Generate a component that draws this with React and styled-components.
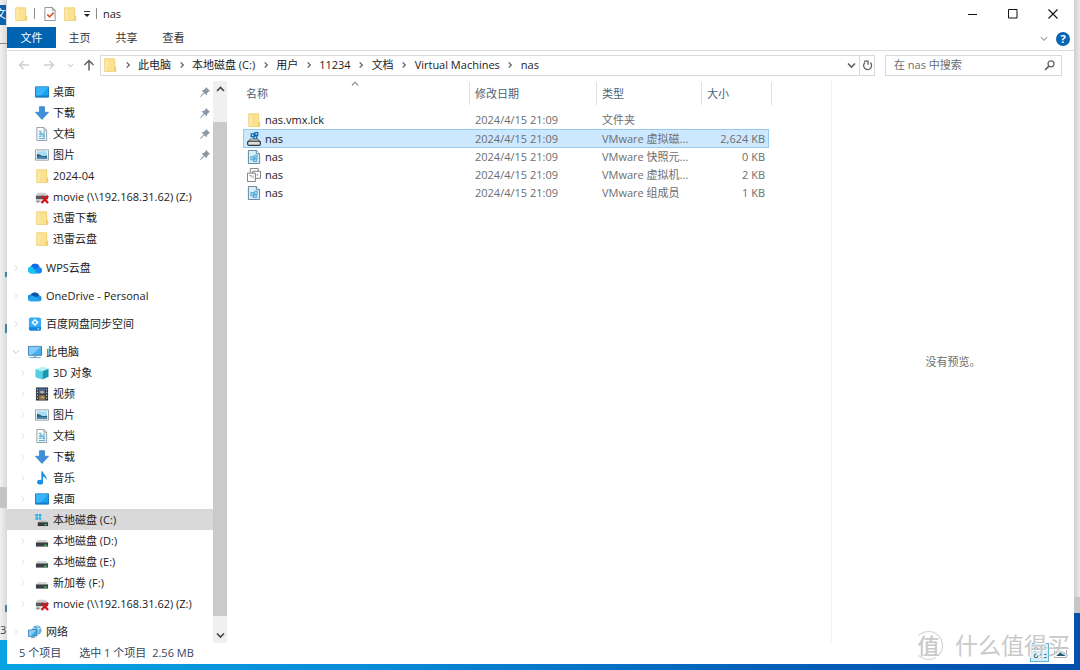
// src/App.jsx
import React from "react";
import styled, { createGlobalStyle, css } from "styled-components";

/* ---------- data ---------- */

const CRUMBS = ["此电脑", "本地磁盘 (C:)", "用户", "11234", "文档", "Virtual Machines", "nas"];

const NAV_GROUPS = [
  {
    id: "quick",
    items: [
      { icon: "desktop", label: "桌面", pinned: true },
      { icon: "download", label: "下载", pinned: true },
      { icon: "document", label: "文档", pinned: true },
      { icon: "picture", label: "图片", pinned: true },
      { icon: "folder", label: "2024-04" },
      { icon: "brokenDrive", label: "movie (\\\\192.168.31.62) (Z:)" },
      { icon: "folder", label: "迅雷下载" },
      { icon: "folder", label: "迅雷云盘" },
    ],
  },
  { id: "wps", root: { icon: "wps", label: "WPS云盘" } },
  { id: "onedrive", root: { icon: "onedrive", label: "OneDrive - Personal" } },
  { id: "baidu", root: { icon: "baidu", label: "百度网盘同步空间" } },
  {
    id: "pc",
    root: { icon: "computer", label: "此电脑", open: true },
    items: [
      { icon: "cube", label: "3D 对象", expandable: true },
      { icon: "video", label: "视频", expandable: true },
      { icon: "picture", label: "图片", expandable: true },
      { icon: "document", label: "文档", expandable: true },
      { icon: "download", label: "下载", expandable: true },
      { icon: "music", label: "音乐", expandable: true },
      { icon: "desktop", label: "桌面", expandable: true },
      { icon: "systemDrive", label: "本地磁盘 (C:)", expandable: true, active: true },
      { icon: "drive", label: "本地磁盘 (D:)", expandable: true },
      { icon: "drive", label: "本地磁盘 (E:)", expandable: true },
      { icon: "drive", label: "新加卷 (F:)", expandable: true },
      { icon: "brokenDrive", label: "movie (\\\\192.168.31.62) (Z:)", expandable: true },
    ],
  },
  { id: "network", root: { icon: "network", label: "网络" } },
];

const FILES = [
  { icon: "folder", name: "nas.vmx.lck", date: "2024/4/15 21:09", type: "文件夹", size: "" },
  { icon: "vmdk", name: "nas", date: "2024/4/15 21:09", type: "VMware 虚拟磁...", size: "2,624 KB", selected: true },
  { icon: "vmFile", name: "nas", date: "2024/4/15 21:09", type: "VMware 快照元...", size: "0 KB" },
  { icon: "vmx", name: "nas", date: "2024/4/15 21:09", type: "VMware 虚拟机...", size: "2 KB" },
  { icon: "vmFile", name: "nas", date: "2024/4/15 21:09", type: "VMware 组成员", size: "1 KB" },
];

/* ---------- icons ---------- */

const ICONS = {
  folder: (
    <>
      <path d="M1.500 .5h11.500v14H1.500z" fill="#fbe291" />
      <path d="M1.500 .5h3v14h-3z" fill="#fdebb0" />
      <path d="M12 9.500h2v5h-2z" fill="#efc75f" />
      <path d="M2 1h10.500v9h1v4.500H2z" fill="none" stroke="#f1d17a" />
    </>
  ),
  desktop: (
    <>
      <path d="M.5 2h14v11h-14z" fill="#18a4f5" stroke="#1878b8" />
      <path d="M1 2.500h13L5 12.500H1z" fill="#39b4fa" />
      <path d="M1 12h13" stroke="#0c6cad" />
    </>
  ),
  download: <path d="M4.800.7h5.400v6h4.300L7.500 14.500.5 6.700h4.300z" fill="#3c8fdd" stroke="#2b73b8" strokeWidth=".7" />,
  document: (
    <>
      <path d="M2 .5h7.500l3 3v11H2z" fill="#fff" stroke="#8d9aa3" />
      <path d="M9.500.5v3h3" fill="none" stroke="#8d9aa3" />
      <path d="M4 4.500h3M8.500 5.500h2.500M4 7.500h7M4 10h3M8.500 10.500h2.500M4 12.500h7" stroke="#409cc6" />
      <path d="M5 5.500h2.500v3.500H5zM8 7.500h2.500V11H8z" fill="#6db9dc" />
    </>
  ),
  picture: (
    <>
      <path d="M.5 2h14v11h-14z" fill="#fff" stroke="#8f989e" />
      <path d="M2 3.500h11v8H2z" fill="#a7dcf5" />
      <path d="M2 6.500c3 0 4 1.500 6 2s3-.5 5 0v3H2z" fill="#2c5f72" />
      <path d="M2 10c4-.8 7-.6 11 0v1.500H2z" fill="#4c8cb4" />
    </>
  ),
  drive: (
    <>
      <path d="M3 6.500h9l2 2.500H1z" fill="#d3d6d8" />
      <path d="M1 9h13v4.500H1z" fill="#3c4043" />
      <path d="M10 12h2.500" stroke="#3fd45a" strokeWidth="1.400" />
    </>
  ),
  brokenDrive: (
    <>
      <path d="M3 3h8l3 3H1z" fill="#cfcfcf" />
      <path d="M1 6h13v4H1z" fill="#55595c" />
      <path d="M1 12h5M3 11v3" stroke="#9c9c9c" strokeWidth="1.600" />
      <path d="M7 6.500l7 7.500M14 6.500l-7 7.500" stroke="#d3121c" strokeWidth="2.500" />
    </>
  ),
  systemDrive: (
    <>
      <path d="M.5 1h2.700v2.700H.5zM4 1h2.700v2.700H4zM.5 4.500h2.700v2.700H.5zM4 4.500h2.700v2.700H4z" fill="#19b1ea" />
      <path d="M5 8h7l2 2H3z" fill="#b7babc" />
      <path d="M3 10h11v4H3z" fill="#34383b" />
      <path d="M10 12.500h2.500" stroke="#3fd45a" strokeWidth="1.400" />
    </>
  ),
  wps: (
    <>
      <path d="M4 13.500a4 4 0 0 1-.8-7.800A5 5 0 0 1 12.400 6.600a3.500 3.500 0 0 1-.6 6.900z" fill="#1389f5" />
      <path d="M4 13.500a4 4 0 0 1 0-8c2.800 0 4 3.500 5 8z" fill="#19c3f0" />
      <path d="M3.200 5.700A5 5 0 0 1 12.400 6.600C8 6 8 10.500 6.500 8.800 5.500 7 4.500 6 3.200 5.700z" fill="#1767e8" />
    </>
  ),
  onedrive: (
    <>
      <path d="M3 13a3.500 3.500 0 0 1 0-7 5.200 5.200 0 0 1 9 .8A3.200 3.200 0 0 1 12.300 13z" fill="#1a8fe0" />
      <path d="M3 6a5.200 5.200 0 0 1 9 .8L7 9.500z" fill="#0a55ab" />
      <path d="M0 11c2-2.600 4.500-5 7-3l7.300 4c-.5.700-1.200 1-2 1H3c-1.500 0-2.600-.8-3-2z" fill="#27a5ec" />
    </>
  ),
  baidu: (
    <>
      <rect x="1" y=".5" width="13" height="14" rx="2" fill="#35acf6" />
      <path d="M1 11h13v1.500a2 2 0 0 1-2 2H3a2 2 0 0 1-2-2z" fill="#1583dc" />
      <path d="M7.500 3l2.800 2.800-2.800 2.800-2.800-2.800z" fill="none" stroke="#fff" strokeWidth="1.500" />
      <path d="M10 12.700h2" stroke="#fff" />
    </>
  ),
  computer: (
    <>
      <path d="M.5 1.500h14v9.500H.5z" fill="#45aef0" stroke="#3a7ba8" />
      <path d="M1 2h13L4 10.500H1z" fill="#83cdf8" />
      <path d="M6 11.500h3v1.500H6z" fill="#9ab4c4" />
      <path d="M1.500 13.500h12" stroke="#5d9fc8" />
    </>
  ),
  cube: (
    <>
      <path d="M.5 3.500L8 .5l6.500 2.500L8 5.500z" fill="#b7f0f7" />
      <path d="M.5 3.500L8 5.500v9L.5 12z" fill="#50d0e2" />
      <path d="M8 5.500L14.500 3v8.500L8 14.500z" fill="#1697b5" />
    </>
  ),
  video: (
    <>
      <path d="M1 .5h13v14H1z" fill="#303338" />
      <path d="M4 1.500h7v6H4z" fill="#4668b5" />
      <path d="M4 8.500h7V14H4z" fill="#826c4b" />
      <path d="M5 5l3-1 2 2-3 1zM5 11l4-1 1 2z" fill="#e3b84e" />
      <path d="M2.500 2v12M12.500 2v12" stroke="#e9e9e9" strokeDasharray="1.500 1.500" />
    </>
  ),
  music: (
    <>
      <path d="M6.800.5h1.700c.3 3.500 5.200 4.500 3.500 9.500-.3-2.500-1.700-3.500-3.500-4v6H6.800z" fill="#168fe6" />
      <ellipse cx="5.500" cy="12" rx="3.200" ry="2.500" fill="#168fe6" />
    </>
  ),
  network: (
    <>
      <circle cx="9.500" cy="5.500" r="5" fill="#65aee0" />
      <path d="M5 3c3 2 6 2 9 0M9.500.5c2 3 2 7 0 10" stroke="#cce9f8" fill="none" />
      <path d="M.5 5.500l9-1v7l-9 1z" fill="#39aaf0" stroke="#2d729f" strokeWidth=".8" />
      <path d="M4 12.500l4-.5v1.500l-5 1z" fill="#739bb5" />
      <path d="M1 6l8-1-6 6.800-2 .2z" fill="#86cff8" />
    </>
  ),
  vmdk: (
    <>
      <path d="M4.500 2h3v3h-3zM8.500 .7h3v3h-3zM7.500 4.500h3v3h-3z" fill="#cfe9fb" stroke="#0c69ad" strokeWidth="1.300" />
      <path d="M3.500 7.500h8l2.500 3H1z" fill="#f6f6f6" stroke="#55595d" />
      <rect x=".7" y="9.700" width="13.600" height="4.600" rx="1.500" fill="#dcdfe2" stroke="#33373b" strokeWidth="1.300" />
    </>
  ),
  vmFile: (
    <>
      <path d="M1.500 .5H10l3.500 3.500v10.500h-12z" fill="#d8effb" stroke="#607f92" />
      <path d="M10 .5V4h3.500" fill="#fff" stroke="#607f92" />
      <path d="M4 7h3.500v3.500H4zM8 5.500h3V9H8zM6.500 9.500h4v3h-4z" fill="#9bd1ee" stroke="#4ba1ce" strokeWidth=".8" />
    </>
  ),
  vmx: (
    <>
      <path d="M3.500.5h8.500V4M3.500.5V5" fill="#fff" stroke="#777" />
      <path d="M6 3.500h8.500V11H6z" fill="#fff" stroke="#777" />
      <path d="M.5 5.500h8.500v9H.5z" fill="#fff" stroke="#777" />
      <path d="M2.500 8h2v2M6.500 8v3M11 6v2.500" fill="none" stroke="#999" />
    </>
  ),
  check: (
    <>
      <path d="M2 .5h8l3 3v11H2z" fill="#fff" stroke="#8d8d8d" />
      <path d="M10 .5v3h3" fill="none" stroke="#8d8d8d" />
      <path d="M4.500 8l2.500 2.500L11.500 6" fill="none" stroke="#df5b2d" strokeWidth="1.800" />
    </>
  ),
};

const Icon = ({ name }) => (
  <Glyph viewBox="0 0 15 15" aria-hidden="true">
    {ICONS[name]}
  </Glyph>
);

const Chevron = ({ dir = "right", size = 8, color = "#5f5f5f", weight = 1.4 }) => {
  const paths = {
    right: "M3 1.500L6 4.500 3 7.500",
    down: "M1 2.500L4.500 6 8 2.500",
    up: "M1 6L4.500 2.500 8 6",
  };
  return (
    <svg width={size} height={size} viewBox="0 0 9 9" fill="none" stroke={color} strokeWidth={weight} aria-hidden="true">
      <path d={paths[dir]} />
    </svg>
  );
};

const Arrow = ({ d, color }) => (
  <svg width="12" height="12" viewBox="0 0 12 12" fill="none" stroke={color} strokeWidth="1.500" aria-hidden="true">
    <path d={d} />
  </svg>
);

const Pin = () => (
  <svg width="10" height="10" viewBox="0 0 10 10" aria-hidden="true">
    <path d="M6 0l4 4-1.200.4-1.800 1.800-.2 2.300L4.400 6.300 .6 9.900 0 9.400l3.700-3.800L1.500 3.200l2.300-.2 1.800-1.800z" fill="#8b98a5" />
  </svg>
);

/* ---------- parts ---------- */

const TitleBar = () => (
  <TitleRow>
    <QuickTools>
      <Icon name="folder" />
      <Separator />
      <ToolButton aria-label="属性">
        <Icon name="check" />
      </ToolButton>
      <ToolButton aria-label="新建文件夹">
        <Icon name="folder" />
      </ToolButton>
      <ToolButton aria-label="自定义快速访问工具栏">
        <svg width="8" height="8" viewBox="0 0 8 8" aria-hidden="true">
          <path d="M1 1.500h6" stroke="#333" />
          <path d="M1 4h6L4 7z" fill="#222" />
        </svg>
      </ToolButton>
      <Separator />
    </QuickTools>
    <WindowTitle>nas</WindowTitle>
    <WindowButton aria-label="最小化">
      <svg width="10" height="10" viewBox="0 0 10 10"><path d="M0 5.500h9" stroke="#111" /></svg>
    </WindowButton>
    <WindowButton aria-label="最大化">
      <svg width="10" height="10" viewBox="0 0 10 10"><path d="M.5.5h8.500v8.500H.5z" fill="none" stroke="#111" /></svg>
    </WindowButton>
    <WindowButton aria-label="关闭">
      <svg width="10" height="10" viewBox="0 0 10 10"><path d="M.5.5l9 9M9.500.5l-9 9" stroke="#111" strokeWidth="1.100" /></svg>
    </WindowButton>
  </TitleRow>
);

const Ribbon = () => (
  <RibbonRow>
    <FileTab>文件</FileTab>
    <RibbonTab>主页</RibbonTab>
    <RibbonTab>共享</RibbonTab>
    <RibbonTab>查看</RibbonTab>
    <RibbonEnd>
      <ToolButton aria-label="展开功能区">
        <Chevron dir="down" color="#9a9a9a" weight={1.2} />
      </ToolButton>
      <HelpButton aria-label="帮助">?</HelpButton>
    </RibbonEnd>
  </RibbonRow>
);

const AddressBar = () => (
  <AddressRow>
    <HistoryButtons>
      <ToolButton aria-label="后退"><Arrow color="#d0d0d0" d="M11 6H1.500M5.500 2l-4 4 4 4" /></ToolButton>
      <ToolButton aria-label="前进"><Arrow color="#d0d0d0" d="M1 6h9.500M6.500 2l4 4-4 4" /></ToolButton>
      <ToolButton aria-label="最近浏览的位置"><Chevron dir="down" size={7} color="#d0d0d0" /></ToolButton>
      <ToolButton aria-label="上移"><Arrow color="#606060" d="M6 11.500V1.500M1.500 6L6 1.500 10.500 6" /></ToolButton>
    </HistoryButtons>
    <AddressBox>
      <Icon name="folder" />
      {CRUMBS.map((crumb) => (
        <React.Fragment key={crumb}>
          <CrumbArrow><Chevron size={8} /></CrumbArrow>
          <Crumb href="#">{crumb}</Crumb>
        </React.Fragment>
      ))}
      <AddressEnd>
        <ToolButton aria-label="以前的位置"><Chevron dir="down" size={9} weight={1.6} /></ToolButton>
        <RefreshButton aria-label="刷新">
          <svg width="11" height="11" viewBox="0 0 11 11" fill="none" stroke="#606060" strokeWidth="1.300">
            <path d="M8.300 2.600a4 4 0 1 1-5.200-.2" />
            <path d="M2 1.200h4v3.600" />
          </svg>
        </RefreshButton>
      </AddressEnd>
    </AddressBox>
    <SearchBox>
      <SearchInput type="text" aria-label="搜索" placeholder="在 nas 中搜索" />
      <svg width="11" height="11" viewBox="0 0 11 11" fill="none" stroke="#606060" strokeWidth="1.300" aria-hidden="true">
        <circle cx="7" cy="3.800" r="3" />
        <path d="M4.900 6.100L1 10" strokeWidth="1.700" />
      </svg>
    </SearchBox>
  </AddressRow>
);

const NavItem = ({ item, root }) => (
  <li>
    <NavLink href="#" $root={root} $active={item.active}>
      <Toggle>
        {(root || item.expandable) && (
          <Chevron dir={item.open ? "down" : "right"} color={item.open ? "#c4c4c4" : "#dcdcdc"} weight={1.1} />
        )}
      </Toggle>
      <Icon name={item.icon} />
      <NavLabel>{item.label}</NavLabel>
      {item.pinned && <Pin />}
    </NavLink>
  </li>
);

const NavPane = () => (
  <Nav aria-label="导航窗格">
    {NAV_GROUPS.map((group) => (
      <NavGroup key={group.id}>
        {group.root && <NavItem item={group.root} root />}
        {(group.items || []).map((item) => (
          <NavItem key={item.label} item={item} />
        ))}
      </NavGroup>
    ))}
  </Nav>
);

const FileList = () => (
  <ListPane>
    <FileTable>
      <colgroup>
        <col width="226" />
        <col width="127" />
        <col width="105" />
        <col width="68" />
      </colgroup>
      <thead>
        <tr>
          <HeadCell>
            名称
            <SortMark><Chevron dir="up" color="#777" weight={1.2} /></SortMark>
          </HeadCell>
          <HeadCell>修改日期</HeadCell>
          <HeadCell>类型</HeadCell>
          <HeadCell $last>大小</HeadCell>
        </tr>
      </thead>
      <tbody>
        {FILES.map((file) => (
          <FileRow key={file.icon + file.name + file.type} $selected={file.selected}>
            <td>
              <FileName>
                <Icon name={file.icon} />
                {file.name}
              </FileName>
            </td>
            <td>{file.date}</td>
            <td>{file.type}</td>
            <SizeCell>{file.size}</SizeCell>
          </FileRow>
        ))}
      </tbody>
    </FileTable>
  </ListPane>
);

const App = () => (
  <Desktop>
    <GlobalStyle />
    <LeftWindow>
      <LeftTab>文</LeftTab>
      <LeftRule />
      <LeftMark $gap={228} $height={5} />
      <LeftMark $gap={47} $height={9} />
      <LeftBlock />
      <LeftMark $gap={97} $height={7} />
      <LeftCount>3</LeftCount>
    </LeftWindow>
    <Window>
      <TitleBar />
      <Ribbon />
      <AddressBar />
      <Main>
        <NavPane />
        <ScrollBar>
          <ScrollButton aria-label="向上滚动"><Chevron dir="up" size={9} color="#444" weight={1.6} /></ScrollButton>
          <ScrollThumb />
          <ScrollButton aria-label="向下滚动"><Chevron dir="down" size={9} color="#444" weight={1.6} /></ScrollButton>
        </ScrollBar>
        <FileList />
        <Preview>没有预览。</Preview>
      </Main>
      <StatusBar>
        <StatusText>5 个项目</StatusText>
        <StatusText>选中 1 个项目</StatusText>
        <StatusText>2.56 MB</StatusText>
        <ViewButtons>
          <ViewButton aria-label="详细信息" $on>
            <svg width="14" height="14" viewBox="0 0 14 14" fill="none" stroke="#5c6a73">
              <path d="M1.500 1.500h3v3h-3zM1.500 8.500h3v3h-3z" />
              <path d="M7 1.500h2.500M11 1.500h2.500M7 4.500h2.500M11 4.500h2.500M7 8.500h2.500M11 8.500h2.500M7 11.500h2.500M11 11.500h2.500" />
            </svg>
          </ViewButton>
          <ViewButton aria-label="大缩略图">
            <svg width="13" height="12" viewBox="0 0 13 12">
              <path d="M.5.5h12v10H.5z" fill="#fff" stroke="#a8b0b5" />
              <path d="M2 5h9v4H2z" fill="#9bd0ec" />
              <path d="M3 8l3-3 5 3v1H3z" fill="#28586c" />
            </svg>
          </ViewButton>
        </ViewButtons>
      </StatusBar>
    </Window>
    <RightWindow />
    <Watermark>
      <WatermarkBadge>值</WatermarkBadge>
      什么值得买
    </Watermark>
  </Desktop>
);

export default App;

/* ---------- styles ---------- */

const GlobalStyle = createGlobalStyle`
  * {
    box-sizing: border-box;
  }

  body {
    margin: 0;
    font-family: "Open Sans", "Noto Sans CJK SC", sans-serif;
    font-size: 11px;
    line-height: 16px;
    color: #1b1b1b;
  }

  button,
  input {
    margin: 0;
    padding: 0;
    border: 0;
    background: none;
    font: inherit;
    color: inherit;
  }

  a {
    color: inherit;
    text-decoration: none;
  }

  svg {
    display: block;
    flex: none;
  }
`;

const Desktop = styled.div`
  position: relative;
  display: grid;
  grid-template-columns: 7px minmax(0, 1fr) 6px;
  min-height: 100vh;
  padding-bottom: 6px;
  overflow: hidden;
  background: linear-gradient(90deg, #08a3e2 0%, #0a8bd6 35%, #0560bb 70%, #0450ab 100%);
`;

const LeftWindow = styled.div`
  display: flex;
  flex-direction: column;
  margin-bottom: 24px;
  padding-top: 5px;
  overflow: hidden;
  background: linear-gradient(90deg, #f1f1f1, #d9d9d9);
`;

const LeftTab = styled.div`
  display: flex;
  justify-content: flex-end;
  height: 20px;
  margin-right: 1px;
  background-color: #0a62ad;
  color: #fff;
  line-height: 18px;
`;

const LeftRule = styled.div`
  height: 1px;
  margin-top: 18px;
  background-color: #8a8a8a;
`;

const LeftMark = styled.div`
  align-self: flex-end;
  width: 2px;
  height: ${({ $height }) => $height}px;
  margin-top: ${({ $gap }) => $gap}px;
  background-color: #3a84b4;
`;

const LeftBlock = styled.div`
  height: 21px;
  margin-top: auto;
  background-color: #c4c4c4;
`;

const LeftCount = styled.div`
  margin-top: 10px;
  padding-bottom: 2px;
  color: #33475f;
`;

const RightWindow = styled.div`
  margin-bottom: 51px;
  border-bottom: 16px solid #c6c6c6;
  background: linear-gradient(90deg, #cfcfcf, #e9e9e9);
`;

const Window = styled.div`
  display: flex;
  flex-direction: column;
  background-color: #fff;
`;

const TitleRow = styled.header`
  display: flex;
  align-items: center;
  height: 27px;
  padding-right: 1px;
`;

const QuickTools = styled.div`
  display: flex;
  align-items: center;
  gap: 6px;
  padding-left: 7px;
`;

const Separator = styled.span`
  width: 1px;
  height: 11px;
  margin-right: 2px;
  background-color: #8c8c8c;

  &:last-child {
    margin-left: -1px;
  }
`;

const ToolButton = styled.button`
  display: flex;
  align-items: center;
  justify-content: center;
`;

const WindowTitle = styled.h1`
  flex: 1;
  margin: 0;
  padding-left: 4px;
  font-size: 11px;
  font-weight: 400;
`;

const WindowButton = styled.button`
  display: flex;
  align-items: center;
  justify-content: center;
  width: 40px;
  height: 27px;
`;

const RibbonRow = styled.nav`
  display: flex;
  align-items: flex-start;
  height: 24px;
  border-bottom: 1px solid #dcdcdc;
`;

const RibbonTab = styled.button`
  width: 47px;
  height: 21px;
  color: #333;
`;

const FileTab = styled(RibbonTab)`
  width: 49px;
  background-color: #0063b1;
  color: #fff;
`;

const RibbonEnd = styled.div`
  display: flex;
  align-items: center;
  gap: 8px;
  height: 23px;
  margin-left: auto;
  padding-right: 4px;
`;

const HelpButton = styled.button`
  width: 14px;
  height: 14px;
  border-radius: 50%;
  background-color: #0a64b4;
  color: #fff;
  font-weight: 700;
  line-height: 14px;
`;

const AddressRow = styled.div`
  display: flex;
  align-items: center;
  height: 28px;
  margin-bottom: 2px;
  padding: 0 12px 0 11px;
`;

const HistoryButtons = styled.div`
  display: flex;
  align-items: center;
  gap: 13px;
  width: 82px;

  button:nth-child(3) {
    margin: 0 -4px 0 -1px;
  }
`;

const AddressBox = styled.div`
  display: flex;
  flex: 1;
  align-items: center;
  height: 21px;
  padding-left: 2px;
  border: 1px solid #d9d9d9;
`;

const CrumbArrow = styled.span`
  display: flex;
  justify-content: center;
  width: 21px;
`;

const Crumb = styled.a`
  white-space: nowrap;
`;

const AddressEnd = styled.div`
  display: flex;
  align-items: center;
  gap: 3px;
  margin-left: auto;
`;

const RefreshButton = styled(ToolButton)`
  width: 15px;
  height: 19px;
  border-left: 1px solid #d9d9d9;
`;

const SearchBox = styled.label`
  display: flex;
  align-items: center;
  width: 177px;
  height: 21px;
  margin-left: 10px;
  padding: 0 6px 0 8px;
  border: 1px solid #d9d9d9;
`;

const SearchInput = styled.input`
  flex: 1;
  min-width: 0;
  outline: none;

  &::placeholder {
    color: #6d6d6d;
    opacity: 1;
  }
`;

const Main = styled.main`
  display: flex;
  flex: 1;
`;

const Nav = styled.nav`
  width: 206px;
`;

const NavGroup = styled.ul`
  margin: 0 0 7px;
  padding: 0;
  list-style: none;

  &:first-child {
    margin-bottom: 8px;
  }

  &:last-child {
    margin-bottom: 0;
  }
`;

const NavLink = styled.a`
  display: flex;
  align-items: center;
  height: 21px;
  padding: 0 3px 0 ${({ $root }) => ($root ? 5 : 12)}px;
  background-color: ${({ $active }) => ($active ? "#d9d9d9" : "transparent")};
  white-space: nowrap;
`;

const Toggle = styled.span`
  width: 16px;
`;

const Glyph = styled.svg`
  width: 14px;
  height: 14px;
`;

const NavLabel = styled.span`
  flex: 1;
  padding-left: 4px;
`;

const ScrollBar = styled.div`
  display: flex;
  flex-direction: column;
  width: 14px;
  background-color: #f0f0f0;
`;

const ScrollButton = styled.button`
  display: flex;
  align-items: center;
  justify-content: center;
  height: 16px;
`;

const ScrollThumb = styled.div`
  flex: 1;
  margin: 25px 0 11px;
  background-color: #cacaca;
`;

const ListPane = styled.section`
  flex: 1;
  min-width: 0;
  padding-left: 16px;
`;

const FileTable = styled.table`
  width: 526px;
  table-layout: fixed;
  border-spacing: 0;
  color: #6d6d6d;

  td {
    height: 18px;
    padding: 0 4px 0 6px;
    white-space: nowrap;
  }

  tbody::before {
    content: "";
    display: block;
    height: 5px;
  }
`;

const HeadCell = styled.th`
  position: relative;
  height: 25px;
  padding: 0 6px;
  color: #4c607a;
  font-weight: 400;
  text-align: left;

  &:first-child {
    padding-left: 3px;
  }

  &::after {
    content: "";
    position: absolute;
    top: 1px;
    right: ${({ $last }) => ($last ? "-3px" : "-1px")};
    width: 1px;
    height: 23px;
    background-color: #e0e0e0;
  }
`;

const SortMark = styled.span`
  position: absolute;
  top: -1px;
  left: 50%;
  margin-left: -5px;
`;

const FileRow = styled.tr`
  && td:first-child {
    padding-left: 4px;
  }

  ${({ $selected }) =>
    $selected &&
    css`
      && td {
        height: 19px;
        background-color: #cce8ff;
        box-shadow: inset 0 1px #99c9ef, inset 0 -1px #99c9ef;
      }

      && td:first-child {
        box-shadow: inset 1px 1px #99c9ef, inset 0 -1px #99c9ef;
      }

      && td:last-child {
        box-shadow: inset -1px 1px #99c9ef, inset 0 -1px #99c9ef;
      }
    `}
`;

const FileName = styled.span`
  display: flex;
  align-items: center;
  gap: 4px;
  color: #1b1b1b;
`;

const SizeCell = styled.td`
  text-align: right;
`;

const Preview = styled.aside`
  display: flex;
  align-items: center;
  justify-content: center;
  width: 243px;
  border-left: 1px solid #f2f2f2;
  color: #6d6d6d;
`;

const StatusBar = styled.footer`
  display: flex;
  align-items: center;
  height: 21px;
  padding: 0 4px 2px 12px;
  color: #33475f;
`;

const StatusText = styled.span`
  margin-right: 6px;

  &:first-child {
    margin-right: 18px;
  }
`;

const ViewButtons = styled.div`
  display: flex;
  gap: 2px;
  margin-left: auto;
`;

const ViewButton = styled.button`
  display: flex;
  align-items: center;
  justify-content: center;
  width: 19px;
  height: 19px;
  border: 1px solid ${({ $on }) => ($on ? "#5fb4d8" : "transparent")};
  background-color: ${({ $on }) => ($on ? "#d3effb" : "transparent")};
`;

const Watermark = styled.div`
  position: absolute;
  right: 10px;
  bottom: 10px;
  display: flex;
  align-items: center;
  gap: 12px;
  color: #c9c9c9;
  font-size: 23px;
  font-weight: 400;
  line-height: 30px;
  text-shadow: 1px 1px 0 #fff;
  pointer-events: none;
`;

const WatermarkBadge = styled.span`
  display: flex;
  align-items: center;
  justify-content: center;
  width: 29px;
  height: 29px;
  border: 1px solid #d2d2d2;
  border-left-color: transparent;
  border-radius: 50%;
  font-size: 22px;
  font-weight: 500;
`;
